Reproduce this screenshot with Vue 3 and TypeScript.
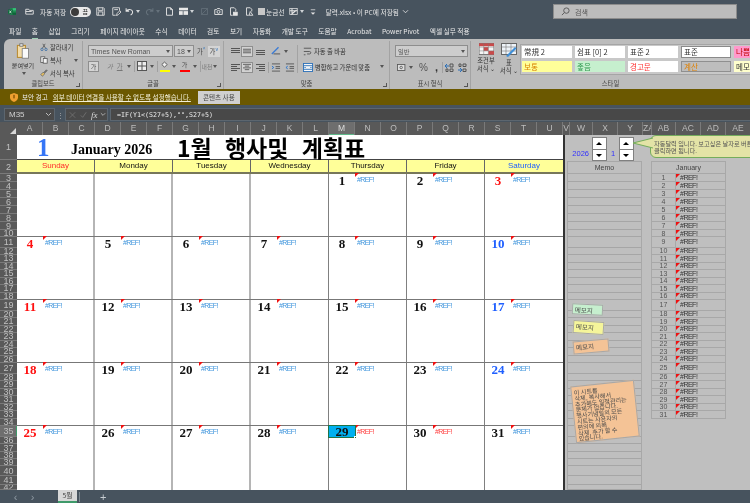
<script setup lang="ts">
const tabs = ['파일','홈','삽입','그리기','페이지 레이아웃','수식','데이터','검토','보기','자동화','개발 도구','도움말','Acrobat','Power Pivot','엑셀 실무 적용']
const columns = ['A','B','C','D','E','F','G','H','I','J','K','L','M','N','O','P','Q','R','S','T','U']
const extraColumns = [
  { name: 'V', w: 7 }, { name: 'W', w: 23 }, { name: 'X', w: 25 }, { name: 'Y', w: 25 },
  { name: 'ZA', w: 9 }, { name: 'AB', w: 24 }, { name: 'AC', w: 25 }, { name: 'AD', w: 25 }, { name: 'AE', w: 25 },
]
const std = [7.5, 7.5, 7.5, 7.5, 7.5, 7.5, 7.5]
const heightsByRow: number[] = [
  25, 14,
  8, 8, 8, 8, 8, 8, 8, 7,
  10.5, ...std,
  10.5, ...std,
  10.5, ...std,
  11, 7, 8, 7, 7, 10, 9, 5,
]
const rows = heightsByRow.map((h, i) => ({ n: i + 1, h }))
const bodyRows = rows.slice(2)
const janRows = rows.slice(2, 33).map((r, i) => ({ day: i + 1, h: r.h }))

type Day = { n?: number; c?: string; refRed?: boolean; sel?: boolean }
const weeks: Day[][] = [
  [{}, {}, {}, {}, { n: 1 }, { n: 2 }, { n: 3, c: 'red' }],
  [{ n: 4, c: 'red' }, { n: 5 }, { n: 6 }, { n: 7 }, { n: 8 }, { n: 9 }, { n: 10, c: 'blue' }],
  [{ n: 11, c: 'red' }, { n: 12 }, { n: 13 }, { n: 14 }, { n: 15 }, { n: 16 }, { n: 17, c: 'blue' }],
  [{ n: 18, c: 'red' }, { n: 19 }, { n: 20 }, { n: 21 }, { n: 22 }, { n: 23 }, { n: 24, c: 'blue' }],
  [{ n: 25, c: 'red' }, { n: 26 }, { n: 27 }, { n: 28 }, { n: 29, refRed: true, sel: true }, { n: 30, refRed: true }, { n: 31 }],
]
const weekdays = ['Sunday','Monday','Tuesday','Wednesday','Thursday','Friday','Saturday']
const stylesTop = ['常規 2','쉼표 [0] 2','표준 2','표준','나쁨']
const stylesBottom = ['보통','좋음','경고문','계산','메모']
const noteLines = ['이 시트를','삭제, 복사해서','추가해도 일정관리는','문제가 없습니다.','행사기념일의 모든','시트는 사용자의','편의에 의해','삭제, 추가 할 수','있습니다.']
</script>

<template>
  <div class="app">
    <header class="titlebar">
      <svg class="xl" width="8" height="9" viewBox="0 0 12 12"><rect x="3" y="1" width="9" height="10" fill="#1f8a50"/><rect x="7" y="1" width="5" height="3.4" fill="#37c27a"/><rect x="7" y="7.6" width="5" height="3.4" fill="#10633a"/><rect x="0" y="3" width="7" height="7" fill="#0f6b3c"/><path d="M2 4.6l3 4M5 4.6l-3 4" stroke="#fff" stroke-width="1"/></svg>
      <svg class="ti ml9" viewBox="0 0 12 12" fill="none" stroke="#e4e4e4" stroke-width="1.2"><path d="M1 3h4l1 1.500h5v5H1zM1 6h8"/></svg>
      <span class="ttxt ml6">자동 저장</span>
      <span class="toggle"><i></i><b>끔</b></span>
      <svg class="ti ml5" viewBox="0 0 12 12" fill="none" stroke="#dcdcdc" stroke-width="1.200"><path d="M1 1h9l1 1v9H1zM3 1v3.500h6V1M3 11V6.500h6V11"/></svg>
      <svg class="ti ml7" viewBox="0 0 12 12" fill="none" stroke="#dcdcdc" stroke-width="1.200"><path d="M10 5V1H1v10h4M3 3.500h5M6 11.500l.8-3 3.500-3.500 1.700 1.700-3.500 3.500z"/></svg>
      <svg class="ti ml4" viewBox="0 0 12 12" fill="none" stroke="#e4e4e4" stroke-width="1.400"><path d="M1.500 1.500v4h4M1.700 5.300C3.500 2.800 8 2.400 9.600 5c1.200 2.200.3 4.400-2.100 5.600"/></svg>
      <span class="caret"></span>
      <svg class="ti ml5" viewBox="0 0 12 12" fill="none" stroke="#66727c" stroke-width="1.400"><path d="M10.500 1.500v4h-4M10.300 5.300C8.500 2.800 4 2.400 2.400 5c-1.200 2.200-.3 4.400 2.100 5.600"/></svg>
      <span class="caret dim"></span>
      <svg class="ti ml5" viewBox="0 0 12 12" fill="none" stroke="#e8e8e8" stroke-width="1.200"><path d="M2 1h5.500L10 3.500V11H2zM7.500 1v2.500H10"/></svg>
      <svg class="ti ml5" viewBox="0 0 12 12"><rect x="0" y="1" width="12" height="3.500" fill="#e8e8e8"/><rect x="0" y="5.500" width="5" height="5" fill="#e8e8e8"/><rect x="6" y="5.500" width="6" height="5" fill="#e8e8e8"/></svg>
      <span class="caret"></span>
      <svg class="ti ml6" viewBox="0 0 12 12" fill="none" stroke="#66727c"><path d="M2 2h8v8H2zM2 10l8-8"/></svg>
      <svg class="ti ml5" viewBox="0 0 12 12" fill="none" stroke="#e4e4e4" stroke-width="1.200"><path d="M1 3.500h2.500l1-1.500h3l1 1.500H11v6.500H1z"/><circle cx="6" cy="6.500" r="2"/></svg>
      <svg class="ti ml6" viewBox="0 0 12 12" fill="none" stroke="#e4e4e4" stroke-width="1.200"><path d="M2 1h5l2 2v3M2 1v10h3"/><rect x="6" y="7" width="5" height="4" fill="#e4e4e4"/></svg>
      <svg class="ti ml7" viewBox="0 0 12 12" fill="none" stroke="#e4e4e4" stroke-width="1.200"><path d="M2 1h5l2 2v3M2 1v10h3M7 6l3.500 5h-5z"/></svg>
      <span class="checkbox"></span>
      <span class="ttxt ml1">눈금선</span>
      <svg class="ti ml4" viewBox="0 0 12 12" fill="none" stroke="#e4e4e4"><rect x="1" y="2" width="10" height="8"/><path d="M1 5h10M4 2v8M3 10l7-6" stroke-width="1.400"/></svg>
      <span class="caret"></span>
      <svg class="eqv ml6" width="6" height="8" viewBox="0 0 8 10" fill="none" stroke="#e4e4e4"><path d="M1 2h6"/><path d="M1 5.500h6L4 8.500z" fill="#e4e4e4" stroke="none"/></svg>
      <span class="ttxt fname">달력.xlsx • 이 PC에 저장됨</span>
      <svg class="chev" width="7" height="5" viewBox="0 0 8 6" fill="none" stroke="#e4e4e4"><path d="M1 1.500l3 3 3-3"/></svg>
      <div class="search">
        <svg width="9" height="9" viewBox="0 0 10 10" fill="none" stroke="#555"><circle cx="6" cy="4" r="3"/><path d="M3.800 6.200L1 9"/></svg>
        <span>검색</span>
      </div>
    </header>

    <nav class="tabs">
      <span v-for="t in tabs" :key="t" class="tab" :class="{ on: t === '홈' }">{{ t }}</span>
    </nav>

    <section class="ribbon">
      <div class="group g-clip">
        <div class="gbody clip">
          <div class="paste">
            <svg width="14" height="16" viewBox="0 0 16 20" fill="none"><rect x="1" y="3" width="10" height="15" fill="#f3dca8" stroke="#b98a2e" stroke-width="1.300"/><rect x="4" y="1" width="4" height="3" fill="#eee" stroke="#666"/><rect x="7" y="7" width="8" height="12" fill="#fafafa" stroke="#777"/></svg>
            <span>붙여넣기</span>
            <span class="caret dark"></span>
          </div>
          <ul class="cliplist">
            <li><svg viewBox="0 0 10 10" fill="none" stroke="#3a6ea5"><circle cx="2.500" cy="8" r="1.500"/><circle cx="7.500" cy="8" r="1.500"/><path d="M3 6.500L6.500 1M7 6.500L3.500 1" stroke="#555"/></svg>잘라내기</li>
            <li><svg viewBox="0 0 10 10" fill="#f2f2f2" stroke="#555"><rect x="1" y="1" width="5" height="7"/><rect x="4" y="3" width="5" height="6"/></svg>복사<span class="caret dark far"></span></li>
            <li><svg viewBox="0 0 10 10" fill="none" stroke="#666"><path d="M1 7l3-3 2 2-3 3z" fill="#e8c060"/><path d="M5 4l3-3 1 1-3 3z" fill="#777"/></svg>서식 복사</li>
          </ul>
        </div>
        <div class="glabel">클립보드<i class="launch"></i></div>
      </div>

      <div class="group g-font">
        <div class="gbody fontb">
          <div class="frow">
            <span class="select fname-sel">Times New Roman<span class="caret dark"></span></span>
            <span class="select fsize ml1">18<span class="caret dark"></span></span>
            <span class="gk ml3">가<sup>^</sup></span>
            <span class="gk hl ml2">가<sup>v</sup></span>
          </div>
          <div class="frow">
            <span class="gbox">가</span>
            <span class="gk light it ml8">가</span>
            <span class="gk light ul ml4">가</span><span class="caret dark ml4"></span>
            <i class="vsep ml3"></i>
            <svg class="ml2" width="10" height="10" viewBox="0 0 10 10" fill="#eee" stroke="#555"><rect x=".5" y=".5" width="9" height="9"/><path d="M5 .5v9M.5 5h9"/></svg><span class="caret dark ml3"></span>
            <i class="vsep ml3"></i>
            <span class="fill yellow ml2"><svg width="9" height="7" viewBox="0 0 10 7" fill="#eee" stroke="#555"><path d="M2 3.500L5 .8l3 2.700-3 3z"/></svg></span><span class="caret dark ml2"></span>
            <span class="fill red ml4">가</span><span class="caret dark ml3"></span>
            <i class="vsep ml3"></i>
            <span class="gk light small ml1">내천</span><span class="caret dark ml1"></span>
          </div>
        </div>
        <div class="glabel">글꼴<i class="launch"></i></div>
      </div>

      <div class="group g-align">
        <div class="gbody alignb">
          <div class="aligngrid">
            <div class="arow">
              <svg class="ln" viewBox="0 0 11 9" stroke="#555"><path d="M1 1.500h9M1 3.500h9M1 5.500h9"/></svg>
              <span class="lbox"><svg class="ln" viewBox="0 0 11 9" stroke="#555"><path d="M1 2.500h9M1 4.500h9M1 6.500h9"/></svg></span>
              <svg class="ln ml2" viewBox="0 0 11 9" stroke="#555"><path d="M1 3.500h9M1 5.500h9M1 7.500h9"/></svg>
              <svg class="ml5" width="10" height="10" viewBox="0 0 12 11" fill="none" stroke="#444"><path d="M1 9L9 1" stroke="#3a7bd5" stroke-width="1.600"/><path d="M3 9h8"/></svg><span class="caret dark ml3"></span>
            </div>
            <div class="arow">
              <svg class="ln" viewBox="0 0 11 9" stroke="#555"><path d="M1 1.500h9M1 3.500h6M1 5.500h9M1 7.500h6"/></svg>
              <span class="lbox"><svg class="ln" viewBox="0 0 11 9" stroke="#555"><path d="M1 1.500h9M3 3.500h5M1 5.500h9M3 7.500h5"/></svg></span>
              <svg class="ln ml2" viewBox="0 0 11 9" stroke="#555"><path d="M1 1.500h9M4 3.500h6M1 5.500h9M4 7.500h6"/></svg>
              <i class="vsep ml2"></i>
              <svg class="ml2" width="10" height="9" viewBox="0 0 11 10" fill="none" stroke="#555"><path d="M1 1h9M5 4h5M5 6h5M1 9h9"/><path d="M1 3.500l2 1.500-2 1.500" stroke="#1f6fd0"/></svg>
              <svg class="ml4" width="10" height="9" viewBox="0 0 11 10" fill="none" stroke="#555"><path d="M1 1h9M5 4h5M5 6h5M1 9h9"/><path d="M3 3.500L1 5l2 1.500" stroke="#1f6fd0"/></svg>
            </div>
          </div>
          <div class="wrapcol">
            <div class="wraprow"><svg width="9" height="9" viewBox="0 0 11 10" fill="none" stroke="#4a4a4a"><path d="M1 1h9M1 5h7c2 0 2 3 0 3H5M1 9h2"/></svg>자동 줄 바꿈</div>
            <div class="wraprow"><svg width="10" height="9" viewBox="0 0 11 10" fill="#f6f6f6" stroke="#2a6fb8"><rect x=".5" y=".5" width="10" height="9"/><path d="M.5 3h10M.5 7h10M3 5l-1.500 0M8 5l1.500 0"/></svg>병합하고 가운데 맞춤</div>
          </div>
          <span class="caret dark alcaret"></span>
        </div>
        <div class="glabel">맞춤<i class="launch"></i></div>
      </div>

      <div class="group g-num">
        <div class="gbody numb">
          <span class="select numsel">일반<span class="caret dark"></span></span>
          <div class="numrow">
            <svg width="10" height="9" viewBox="0 0 12 10" fill="#ddd" stroke="#555"><rect x=".5" y="1.500" width="9" height="7"/><circle cx="5" cy="5" r="1.500"/></svg><span class="caret dark ml2"></span>
            <span class="pct">%</span>
            <span class="comma">,</span>
            <i class="vsep ml4"></i>
            <svg class="ml2" width="9" height="9" viewBox="0 0 9 9" fill="none" stroke="#2a6fb8"><path d="M0 3h4M2 1l-2 2 2 2"/><path d="M5 1h3v3H5zM1 6h2v2.500H1zM5 6h3v2.500H5z" stroke="#555"/></svg>
            <svg class="ml4" width="9" height="9" viewBox="0 0 9 9" fill="none" stroke="#2a6fb8"><path d="M0 7h4M2 5l2 2-2 2"/><path d="M1 1h2v2.500H1zM5 1h3v2.500H5zM5 6h3v2.500H5z" stroke="#555"/></svg>
          </div>
        </div>
        <div class="glabel">표시 형식<i class="launch"></i></div>
      </div>

      <div class="group g-style">
        <div class="gbody styleb">
          <div class="bigbtn">
            <svg width="15" height="12" viewBox="0 0 16 12"><rect width="16" height="12" fill="#f3f3f3" stroke="#666"/><rect x="0" y="0" width="16" height="3" fill="#c94a4a"/><rect x="5" y="4" width="5" height="4" fill="#c94a4a"/><rect x="10" y="8" width="6" height="4" fill="#c94a4a"/><path d="M5 0v12M10 0v12M0 4h16M0 8h16" stroke="#777" stroke-width=".5"/></svg>
            <span>조건부<br>서식 ⌄</span>
          </div>
          <div class="bigbtn">
            <svg width="16" height="14" viewBox="0 0 16 14"><rect x=".5" y=".5" width="15" height="11" fill="#eef3f8" stroke="#666"/><path d="M5 .5v11M10 .5v11M.5 4h15M.5 8h15" stroke="#777" stroke-width=".6"/><path d="M5 13L14 4l1.500 1.500L7 14z" fill="#3f8fd8"/></svg>
            <span>표<br>서식 ⌄</span>
          </div>
          <div class="gallery">
            <div class="srow">
              <span v-for="(s, i) in stylesTop" :key="s" class="sty" :class="'t-' + i">{{ s }}</span>
            </div>
            <div class="srow low">
              <span v-for="(s, i) in stylesBottom" :key="s" class="sty" :class="'b-' + i">{{ s }}</span>
            </div>
          </div>
        </div>
        <div class="glabel">스타일</div>
      </div>
    </section>

    <section class="secbar">
      <svg width="8" height="9" viewBox="0 0 9 10"><path d="M4.500 0L9 1.500v3.500c0 2.500-2 4-4.500 5C2 9 0 7.500 0 5V1.500z" fill="#f0a030"/><rect x="3.800" y="2" width="1.400" height="4" fill="#7a4a00"/></svg>
      <span class="sectitle">보안 경고</span>
      <span class="seclink">외부 데이터 연결을 사용할 수 없도록 설정했습니다.</span>
      <button class="secbtn">콘텐츠 사용</button>
    </section>

    <section class="formula">
      <div class="namebox">M35<svg width="7" height="5" viewBox="0 0 7 5" fill="none" stroke="#bbb"><path d="M1 1l2.500 2.500L6 1"/></svg></div>
      <span class="dots">⋮</span>
      <div class="fnbox">
        <svg width="8" height="8" viewBox="0 0 9 9" stroke="#777" fill="none"><path d="M1 1l7 7M8 1l-7 7"/></svg>
        <svg width="8" height="8" viewBox="0 0 9 9" stroke="#777" fill="none"><path d="M1 5l2.500 2.500L8 1"/></svg>
        <i class="fx">fx</i>
        <svg width="7" height="5" viewBox="0 0 7 5" fill="none" stroke="#bbb"><path d="M1 1l2.500 2.500L6 1"/></svg>
      </div>
      <div class="finput">=IF(Y1&lt;(S27+5),"",S27+5)</div>
    </section>

    <div class="colhead">
      <span class="corner"><i></i></span>
      <span v-for="c in columns" :key="c" class="col" :class="{ active: c === 'M' }">{{ c }}</span>
      <span v-for="c in extraColumns" :key="c.name" class="col" :style="{ width: c.w + 'px' }">{{ c.name }}</span>
    </div>

    <div class="sheet">
      <div class="rowhead">
        <span v-for="r in rows" :key="r.n" class="rowlabel" :class="{ active: r.n === 35 }" :style="{ height: r.h + 'px' }">{{ r.n }}</span>
      </div>

      <div class="calendar">
        <div class="caltitle">
          <span class="monthnum">1</span>
          <span class="monthname">January 2026</span>
          <span class="plan">1월 행사및 계획표</span>
        </div>
        <div class="weekdays">
          <span v-for="d in weekdays" :key="d" class="wd" :class="{ sun: d === 'Sunday', sat: d === 'Saturday' }">{{ d }}</span>
        </div>
        <div v-for="(w, i) in weeks" :key="i" class="week">
          <div v-for="(d, j) in w" :key="j" class="day" :class="{ soft: j < 3 }">
            <div v-if="d.n" class="dayhead">
              <span class="dnum" :class="[d.c, { sel: d.sel }]">{{ d.n }}</span>
              <span class="dref" :class="{ red: d.refRed }">#REF!</span>
            </div>
          </div>
        </div>
      </div>

      <div class="side">
        <div class="sidetop">
          <span class="yr">2026</span>
          <div class="spin"><span class="up"></span><span class="dn"></span></div>
          <span class="mo">1</span>
          <div class="spin"><span class="up"></span><span class="dn"></span></div>
        </div>
        <div class="tables">
          <div class="memo">
            <div class="thead">Memo</div>
            <div v-for="r in bodyRows" :key="r.n" class="mrow" :style="{ height: r.h + 'px' }"></div>
          </div>
          <div class="jan">
            <div class="thead">January</div>
            <div v-for="r in janRows" :key="r.day" class="jrow" :style="{ height: r.h + 'px' }">
              <span class="jd">{{ r.day }}</span>
              <span class="jv">#REF!</span>
            </div>
          </div>
        </div>

        <div class="tip">
          <svg class="tiparrow" width="20" height="14" viewBox="0 0 20 14"><path d="M20 2L0 7l20 5" fill="#e3e3a6" stroke="#74ac5c"/></svg>
          <p>자동달력 입니다. 보고싶은 날자로 버튼을<br>클릭하면 됩니다.</p>
        </div>
        <div class="note n1">메모지</div>
        <div class="note n2">메모지</div>
        <div class="note n3">메모지</div>
        <div class="note n4"><span v-for="l in noteLines" :key="l">{{ l }}</span></div>
      </div>
    </div>

    <footer class="sheetbar">
      <span class="nav">‹</span><span class="nav">›</span>
      <span class="sheettab">5월</span>
      <i class="tabsep"></i>
      <span class="plus">+</span>
    </footer>
  </div>
</template>

<style>
html, body { margin: 0; background: #47535e; }
</style>

<style scoped>
.app { width: 750px; height: 503px; overflow: hidden; background: #47535e; font-family: "Noto Sans CJK KR", "Noto Sans", sans-serif; font-size: 6.500px; color: #222; display: flex; flex-direction: column; filter: blur(0.25px); position: relative; }
i { font-style: normal; }
.ml1 { margin-left: 1px !important; }
.ml2 { margin-left: 2px !important; }
.ml3 { margin-left: 3px !important; }
.ml4 { margin-left: 4px !important; }
.ml5 { margin-left: 5px !important; }
.ml6 { margin-left: 6px !important; }
.ml7 { margin-left: 7px !important; }
.ml8 { margin-left: 8px !important; }
.ml9 { margin-left: 9px !important; }
.titlebar { height: 23px; flex: none; display: flex; align-items: center; color: #e8e8e8; }
.xl { margin-left: 8px; flex: none; }
.ti { flex: none; width: 9px; height: 9px; }
.ttxt { font-size: 6.700px; white-space: nowrap; }
.toggle { margin-left: 4px; width: 21px; height: 10px; border-radius: 5px; background: #e8e8e8; display: flex; align-items: center; justify-content: space-between; padding: 0 3px 0 1px; box-sizing: border-box; color: #222; flex: none; }
.toggle i { width: 8px; height: 8px; border-radius: 50%; background: #3c3c3c; }
.toggle b { font-size: 6px; font-weight: 400; }
.caret { display: inline-block; flex: none; width: 0; height: 0; border: 2px solid transparent; border-top: 3px solid #cfd3d7; border-bottom: 0; margin-left: 2px; }
.caret.dim { border-top-color: #66727c; }
.caret.dark { border-top-color: #555; }
.checkbox { width: 7px; height: 7px; background: #c8c8c8; margin-left: 4px; flex: none; }
.eqv { flex: none; }
.fname { margin-left: 10px; }
.chev { margin-left: 3px; flex: none; }
.search { position: absolute; left: 553px; top: 4px; width: 184px; height: 15px; background: #bcbcbc; border: 1px solid #8c8c8c; box-sizing: border-box; display: flex; align-items: center; padding-left: 7px; gap: 5px; color: #555; font-size: 7px; }
.tabs { height: 16px; flex: none; display: flex; align-items: center; gap: 10.500px; padding-left: 9px; color: #eaeaea; font-size: 6.700px; white-space: nowrap; }
.tab { position: relative; line-height: 16px; }
.tab.on::after { content: ""; position: absolute; left: 0; right: 0; bottom: 0; height: 1px; background: #9fd0b4; }
.ribbon { height: 50px; flex: none; margin-left: 4px; background: #bcbcbc; border-top-left-radius: 6px; display: flex; color: #333; overflow: hidden; }
.group { display: flex; flex-direction: column; border-right: 1px solid #a3a3a3; margin: 2px 0 0; box-sizing: border-box; position: relative; flex: none; }
.gbody { height: 37px; display: flex; }
.glabel { height: 11px; text-align: center; line-height: 11px; font-size: 6.300px; color: #444; position: relative; }
.launch { position: absolute; right: 2px; bottom: 2px; width: 3px; height: 3px; border-right: 1px solid #555; border-bottom: 1px solid #555; }
.g-clip { width: 79px; }
.g-font { width: 141px; }
.g-align { width: 166px; }
.g-num { width: 81px; }
.g-style { flex: 1 0 auto; width: 275px; border-right: 0; }
.clip { padding-left: 7px; gap: 5px; }
.paste { width: 24px; display: flex; flex-direction: column; align-items: center; font-size: 6.100px; line-height: 9px; white-space: nowrap; padding-top: 2px; }
.paste span { margin-top: 2px; }
.cliplist { list-style: none; margin: 0; padding: 1px 0 0; display: flex; flex-direction: column; gap: 3px; }
.cliplist li { display: flex; align-items: center; gap: 2px; height: 10px; font-size: 6.300px; white-space: nowrap; }
.cliplist svg { width: 8px; height: 8px; flex: none; }
.far { margin-left: 10px; }
.fontb { flex-direction: column; padding: 4px 0 0 5px; gap: 3px; }
.frow { display: flex; align-items: center; height: 12px; color: #444; }
.select { box-sizing: border-box; height: 12px; border: 1px solid #8e8e8e; background: #cdcdcd; display: flex; align-items: center; justify-content: space-between; padding: 0 2px; font-family: "Liberation Sans", sans-serif; font-size: 7px; color: #555; white-space: nowrap; flex: none; }
.fname-sel { width: 85px; }
.fsize { width: 20px; }
.gk { font-size: 6.300px; display: inline-block; white-space: nowrap; }
.gk sup { font-size: 5px; color: #2a6fb8; line-height: 0; }
.gk.hl { background: #d4d4d4; padding: 1px 2px; }
.gk.light { color: #777; }
.gk.it { font-style: italic; }
.gk.ul { text-decoration: underline; }
.gk.small { font-size: 5.800px; }
.gbox { width: 11px; height: 11px; border: 1px solid #8e8e8e; background: #d4d4d4; text-align: center; line-height: 9px; font-size: 6px; box-sizing: border-box; flex: none; }
.vsep { width: 1px; height: 11px; background: #a0a0a0; flex: none; }
.fill { display: inline-flex; flex-direction: column; align-items: center; height: 11px; width: 10px; border-bottom: 2px solid; box-sizing: border-box; line-height: 8px; font-size: 6px; flex: none; }
.fill.yellow { border-color: #ffff00; }
.fill.red { border-color: #ff0000; }
.alignb { padding: 4px 0 0 6px; position: relative; }
.aligngrid { width: 67px; flex: none; display: flex; flex-direction: column; gap: 4px; }
.arow { display: flex; align-items: center; height: 12px; }
.ln { width: 11px; height: 9px; flex: none; display: block; }
.lbox { flex: none; width: 12px; height: 11px; box-sizing: border-box; border: 1px solid #8e8e8e; background: #d2d2d2; display: flex; align-items: center; justify-content: center; }
.lbox .ln { width: 10px; height: 8px; }
.wrapcol { display: flex; flex-direction: column; gap: 4px; border-left: 1px solid #a3a3a3; padding-left: 5px; height: 28px; }
.wraprow { display: flex; align-items: center; gap: 2px; font-size: 6.300px; white-space: nowrap; height: 12px; }
.alcaret { position: absolute; left: 154px; top: 24px; }
.numb { flex-direction: column; padding: 4px 0 0 5px; }
.numsel { width: 73px; height: 12px; font-family: "Noto Sans CJK KR", sans-serif; font-size: 6.200px; }
.numrow { display: flex; align-items: center; margin-top: 4px; padding-left: 2px; height: 12px; color: #555; }
.pct { font-family: "Liberation Sans", sans-serif; font-size: 10px; margin-left: 6px; }
.comma { font-family: "Liberation Sans", sans-serif; font-size: 11px; font-weight: 700; line-height: 8px; color: #333; margin-left: 7px; }
.styleb { padding-left: 3px; }
.bigbtn { width: 24px; flex: none; display: flex; flex-direction: column; align-items: center; font-size: 6.300px; line-height: 8px; text-align: center; white-space: nowrap; padding-top: 2px; gap: 2px; }
.bigbtn + .bigbtn { width: 22px; }
.gallery { margin-top: 3px; width: 232px; flex: none; background: #c8c8c8; border: 1px solid #a5a5a5; border-right: 0; padding: 1px 0 0 1px; height: 31px; box-sizing: border-box; }
.srow { display: flex; gap: 3px; }
.srow.low { margin-top: 3px; }
.sty { flex: none; box-sizing: border-box; width: 50px; height: 12px; padding-left: 2px; font-size: 7.500px; line-height: 12px; background: #fff; white-space: nowrap; overflow: hidden; }
.low .sty { height: 11px; line-height: 11px; }
.t-3 { border: 1px solid #8a8a8a; line-height: 10px; }
.t-4 { background: #ff99cc; color: #c00000; }
.b-0 { background: #ffff99; color: #d98000; }
.b-1 { background: #c6efce; color: #2f9a50; }
.b-2 { color: #ff3030; }
.b-3 { background: #bdbdbd; color: #e08000; border: 1px solid #8f8f8f; }
.low .b-3 { line-height: 9px; }
.b-4 { background: #ffffcc; }
.secbar { height: 16px; flex: none; background: #6b5800; display: flex; align-items: center; color: #efefef; font-size: 6.600px; padding-left: 10px; }
.sectitle { margin-left: 4px; }
.seclink { margin-left: 5px; text-decoration: underline; color: #f2f0d8; }
.secbtn { margin-left: 7px; width: 42px; height: 13px; border: 0; padding: 0; background: #d0d0d0; color: #444; font: inherit; }
.formula { height: 17px; flex: none; display: flex; align-items: center; padding: 2px 0 0 4px; box-sizing: border-box; }
.namebox { width: 51px; height: 13px; flex: none; box-sizing: border-box; background: #4a4a4a; border: 1px solid #5c666f; color: #cfcfcf; display: flex; align-items: center; justify-content: space-between; padding: 0 2px 0 4px; font-family: "Liberation Sans", sans-serif; font-size: 8px; }
.dots { color: #aaa; width: 10px; text-align: center; flex: none; }
.fnbox { width: 43px; height: 13px; flex: none; box-sizing: border-box; background: #4a4a4a; border: 1px solid #5c666f; display: flex; align-items: center; gap: 4px; padding: 0 1px 0 3px; }
.fnbox svg:last-child { margin-left: -2px; }
.fx { font-family: "Liberation Serif", serif; font-style: italic; color: #ddd; font-size: 9px; width: 8px; }
.finput { flex: 1; margin-left: 2px; height: 13px; background: #484848; border: 1px solid #5c666f; border-right: 0; color: #ececec; font-family: "DejaVu Sans Mono", monospace; font-size: 6.650px; line-height: 12px; padding-left: 6px; box-sizing: border-box; }
.colhead { height: 13px; flex: none; display: flex; background: #595959; color: #bdbdbd; font-family: "Liberation Sans", sans-serif; font-size: 8.500px; line-height: 13px; overflow: hidden; }
.corner { width: 17px; flex: none; position: relative; }
.corner i { position: absolute; right: 1px; bottom: 1px; border: 3px solid transparent; border-right-color: #d8d8d8; border-bottom-color: #d8d8d8; }
.col { width: 26px; flex: none; box-sizing: border-box; text-align: center; border-right: 1px solid #7a7a7a; overflow: hidden; white-space: nowrap; }
.col.active { background: #6e6e6e; color: #ddd; box-shadow: inset 0 -1px #5fb98a; }
.sheet { height: 355px; flex: none; display: flex; background: #bfbfbf; position: relative; overflow: hidden; }
.rowhead { width: 17px; flex: none; display: flex; flex-direction: column; background: #595959; }
.rowlabel { flex: none; box-sizing: border-box; display: flex; align-items: center; justify-content: center; color: #c0c0c0; border-bottom: 1px solid #7a7a7a; font-family: "Liberation Sans", sans-serif; font-size: 9px; overflow: hidden; }
.rowlabel.active { background: #6e6e6e; box-shadow: inset -1px 0 #3f9a6a; }
.calendar { width: 548px; flex: none; background: #fff; display: flex; flex-direction: column; border-right: 2px solid #333; box-sizing: border-box; }
.caltitle { height: 25px; flex: none; display: grid; grid-template-columns: 54px 106px 1fr; align-items: center; border-bottom: 1px solid #444; box-sizing: border-box; color: #000; white-space: nowrap; }
.monthnum { padding-left: 20px; font-family: "Liberation Serif", serif; font-size: 25px; font-weight: 700; color: #3575f6; line-height: 25px; }
.monthname { font-family: "Liberation Serif", serif; font-size: 14px; font-weight: 700; padding-top: 4px; }
.plan { font-family: "Noto Sans CJK KR", sans-serif; font-size: 23px; font-weight: 700; line-height: 25px; word-spacing: 8px; }
.weekdays { height: 14px; flex: none; display: grid; grid-template-columns: repeat(7, 78px); background: #ffff99; border-bottom: 2px solid #77775a; box-sizing: border-box; }
.wd { text-align: center; font-family: "Liberation Sans", sans-serif; font-size: 8px; line-height: 12px; border-right: 1px solid #666; color: #111; }
.wd.sun { color: #ff2a2a; }
.wd.sat { color: #2060ff; border-right: 0; }
.week { height: 63px; flex: none; display: grid; grid-template-columns: repeat(7, 78px); border-bottom: 1px solid #777; box-sizing: border-box; }
.week:last-child { border-bottom: 0; height: 64px; }
.day { border-right: 1px solid #808080; box-sizing: border-box; }
.day:last-child { border-right: 0; }
.day.soft { border-right: 2px solid #b5b5b5; }
.dayhead { display: flex; align-items: flex-start; height: 11px; }
.dnum { width: 26px; flex: none; height: 11px; box-sizing: border-box; text-align: center; font-family: "Liberation Serif", serif; font-size: 13px; font-weight: 700; line-height: 13px; color: #111; }
.dnum.red { color: #ff1010; }
.dnum.blue { color: #2060ff; }
.dnum.sel { background: #00b0f0; outline: 1px solid #217346; position: relative; z-index: 2; line-height: 11px; }
.dnum.sel::after { content: ""; position: absolute; right: -2px; bottom: -2px; width: 3px; height: 3px; background: #217346; border: 1px solid #fff; box-sizing: border-box; }
.dref { margin-left: 1px; padding-left: 1px; position: relative; font-family: "Liberation Sans", sans-serif; font-size: 7px; letter-spacing: -0.6px; line-height: 11px; color: #3f95dc; }
.dref.red { color: #ff4040; }
.dref::before { content: ""; position: absolute; left: -1px; top: -1px; border: 2px solid transparent; border-left-color: #f01010; border-top-color: #f01010; }
.side { flex: 1; position: relative; min-width: 0; color: #444; }
.sidetop { height: 26px; display: flex; align-items: flex-end; box-sizing: border-box; }
.yr { width: 27px; text-align: right; padding-right: 3px; box-sizing: border-box; font-family: "Liberation Sans", sans-serif; font-size: 7.500px; color: #3030ff; line-height: 13px; padding-bottom: 1px; flex: none; }
.spin { width: 15px; height: 24px; flex: none; border: 1px solid #808080; box-sizing: border-box; display: flex; flex-direction: column; background: #fff; }
.spin span { flex: 1; position: relative; }
.up { border-bottom: 1px solid #808080; }
.up::after, .dn::after { content: ""; position: absolute; left: 3px; top: 4px; border: 3px solid transparent; }
.up::after { border-bottom: 3px solid #000; border-top: 0; }
.dn::after { border-top: 3px solid #000; border-bottom: 0; }
.mo { width: 12px; text-align: center; flex: none; font-family: "Liberation Sans", sans-serif; font-size: 7.500px; color: #3030ff; line-height: 13px; padding-bottom: 1px; }
.tables { display: flex; padding-left: 2px; gap: 9px; }
.memo, .jan { width: 75px; flex: none; border-left: 1px solid #a8a8a8; border-right: 1px solid #a8a8a8; box-sizing: border-box; }
.thead { height: 13px; box-sizing: border-box; border-top: 1px solid #a8a8a8; border-bottom: 1px solid #a8a8a8; text-align: center; font-family: "Liberation Sans", sans-serif; font-size: 7px; line-height: 12px; color: #444; }
.mrow { box-sizing: border-box; border-bottom: 1px solid #a6a6a6; }
.jan { align-self: flex-start; }
.jrow { box-sizing: border-box; border-bottom: 1px solid #a8a8a8; display: flex; align-items: center; font-family: "Liberation Sans", sans-serif; font-size: 7px; }
.jd { width: 24px; text-align: center; flex: none; color: #555; border-right: 1px solid #a8a8a8; height: 100%; display: flex; align-items: center; justify-content: center; box-sizing: border-box; }
.jv { position: relative; flex: 1; padding-left: 4px; color: #333; letter-spacing: -0.5px; height: 100%; display: flex; align-items: center; }
.jv::before { content: ""; position: absolute; left: 0; top: 0; border: 2px solid transparent; border-left-color: #f01010; border-top-color: #f01010; }
.tip { position: absolute; left: 85px; top: 0; width: 115px; height: 23px; box-sizing: border-box; background: #e3e3a6; border: 1px solid #74ac5c; border-radius: 6px; color: #555; }
.tip p { margin: 4px 0 0 3px; font-size: 6.200px; line-height: 7px; white-space: nowrap; }
.tiparrow { position: absolute; left: -18px; top: 0; }
.note { position: absolute; box-sizing: border-box; color: #4a4a4a; font-size: 6.500px; line-height: 10px; padding-left: 2px; border: 1px solid #a8a8a8; white-space: nowrap; }
.n1 { left: 7px; top: 168.500px; width: 31px; height: 11px; background: #c6efce; transform: rotate(3deg); }
.n2 { left: 7.500px; top: 186px; width: 31px; height: 12.500px; background: #f5f59a; transform: rotate(4deg); }
.n3 { left: 7.750px; top: 205px; width: 35.500px; height: 12.500px; background: #f4c396; transform: rotate(-5deg); }
.n4 { left: 8px; top: 247.500px; width: 64px; height: 57px; background: #f4c396; transform: rotate(-6deg); padding: 3px 0 0 2px; line-height: 5.800px; font-size: 6.100px; display: flex; flex-direction: column; }
.sheetbar { flex: 1; display: flex; align-items: center; background: #47535e; color: #8f9aa3; position: relative; font-family: "Liberation Sans", sans-serif; }
.nav { width: 17px; text-align: center; font-size: 11px; flex: none; }
.nav:first-child { margin-left: 7px; }
.sheettab { margin-left: 17px; width: 19px; height: 13px; background: #d8d8d8; color: #444; text-align: center; font-family: "Noto Sans CJK KR", sans-serif; font-size: 6.800px; line-height: 10px; box-sizing: border-box; border-bottom: 2px solid #3f9a6a; flex: none; }
.tabsep { width: 1px; height: 10px; background: #7b8790; margin-left: 2px; flex: none; }
.plus { margin-left: 20px; font-size: 11px; color: #c8ced3; }
</style>
